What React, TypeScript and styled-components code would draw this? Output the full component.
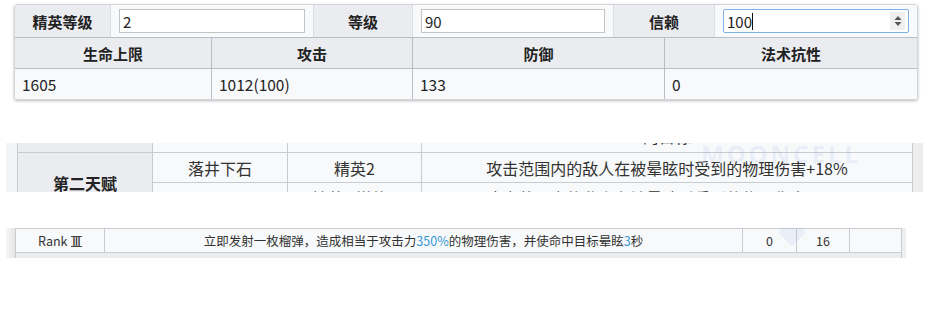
import styled, { createGlobalStyle } from "styled-components";

const GlobalStyle = createGlobalStyle`
  html, body { margin: 0; padding: 0; background: #fff; }
  body {
    font-family: "Noto Sans CJK SC", "Noto Sans", sans-serif;
    color: #222;
  }
  * { box-sizing: border-box; }
`;

const gridLine = "#c8ccd1";
const headBg = "#eaecf0";
const cellBg = "#f8f9fa";

export default function App() {
  return (
    <Page>
      <GlobalStyle />

      {/* 干员属性面板 */}
      <Panel>
        <LevelRow>
          <Label>精英等级</Label>
          <InputCell>
            <Field defaultValue="2" />
          </InputCell>
          <Label>等级</Label>
          <InputCell>
            <Field defaultValue="90" />
          </InputCell>
          <Label>信赖</Label>
          <InputCell $last>
            <FocusField>
              <span>100</span>
              <Caret />
              <Spinner>
                <svg width="8" height="12" viewBox="0 0 8 12">
                  <path d="M4 1 L7.5 5 H0.5 Z" fill="#555" />
                  <path d="M4 11 L7.5 7 H0.5 Z" fill="#555" />
                </svg>
              </Spinner>
            </FocusField>
          </InputCell>
        </LevelRow>

        <StatGrid>
          <Head>生命上限</Head>
          <Head>攻击</Head>
          <Head>防御</Head>
          <Head $last>法术抗性</Head>
          <Value>1605</Value>
          <Value>1012(100)</Value>
          <Value>133</Value>
          <Value $last>0</Value>
        </StatGrid>
      </Panel>

      {/* 天赋表 */}
      <TalentStrip>
        <EdgeLeft />
        <TalentClip>
          <TalentGrid>
            <TalentName />
            <TalentCell />
            <TalentCell />
            <TalentCell $bottom>的目标</TalentCell>

            <TalentName $span={2}>第二天赋</TalentName>
            <TalentCell>落井下石</TalentCell>
            <TalentCell>精英2</TalentCell>
            <TalentCell>攻击范围内的敌人在被晕眩时受到的物理伤害+18%</TalentCell>

            <TalentCell />
            <TalentCell>精英2 潜能5</TalentCell>
            <TalentCell>攻击范围内的敌人在被晕眩时受到的物理伤害+21%</TalentCell>
          </TalentGrid>
          <Watermark>MOONCELL</Watermark>
        </TalentClip>
        <EdgeRight />
      </TalentStrip>

      {/* 技能等级表 */}
      <SkillStrip>
        <SkillEdge />
        <SkillClip>
          <SkillGrid>
            <SkillCell>
              <span>
                Rank<Numeral>Ⅲ</Numeral>
              </span>
            </SkillCell>
            <SkillCell>
              <span>
                立即发射一枚榴弹，造成相当于攻击力<Hl>350%</Hl>的物理伤害，并使命中目标晕眩<Hl>3</Hl>秒
              </span>
            </SkillCell>
            <SkillCell>0</SkillCell>
            <SkillCell>16</SkillCell>
            <SkillCell />
          </SkillGrid>
          <NextRow />
          <Diamond />
        </SkillClip>
        <SkillEdgeRight />
      </SkillStrip>
    </Page>
  );
}

/* ===== layout ===== */

const Page = styled.div`
  width: 926px;
  height: 324px;
  overflow: hidden;
  display: flex;
  flex-direction: column;
  padding-top: 4px;
`;

/* ===== 属性面板 ===== */

const Panel = styled.section`
  width: 904px;
  margin-left: 14px;
  border: 1px solid #d3d6da;
  border-radius: 3px;
  box-shadow: 0 1px 3px rgba(0, 0, 0, 0.28);
  overflow: hidden;
`;

const LevelRow = styled.div`
  display: grid;
  grid-template-columns: 96px 203px 99px 201px 101px 202px;
  height: 33px;
  border-bottom: 1px solid #b9bec5;
`;

const Label = styled.div`
  display: flex;
  align-items: center;
  justify-content: center;
  background: ${headBg};
  border-right: 1px solid #dcdfe3;
  font-size: 15px;
  font-weight: 700;
`;

const InputCell = styled.div<{ $last?: boolean }>`
  display: flex;
  align-items: center;
  padding: 0 8px;
  background: ${cellBg};
  border-right: ${(p) => (p.$last ? "none" : "1px solid #dcdfe3")};
`;

const Field = styled.input`
  width: 100%;
  height: 24px;
  border: 1px solid #c4c4c4;
  padding: 0 3px;
  background: #fff;
  font-family: inherit;
  font-size: 15px;
  color: #222;
  outline: none;
`;

const FocusField = styled.div`
  width: 100%;
  height: 24px;
  display: flex;
  align-items: center;
  padding: 0 3px;
  background: #fff;
  border: 1px solid #7fb0e8;
  border-radius: 2px;
  font-size: 15px;
  color: #222;
`;

const Caret = styled.i`
  width: 1px;
  height: 17px;
  background: #111;
`;

const Spinner = styled.div`
  margin-left: auto;
  width: 15px;
  height: 18px;
  background: #f0f0f0;
  display: flex;
  align-items: center;
  justify-content: center;
`;

const StatGrid = styled.div`
  display: grid;
  grid-template-columns: 197px 201px 252px 252px;
  grid-template-rows: 31px 30px;
`;

const Head = styled.div<{ $last?: boolean }>`
  display: flex;
  align-items: center;
  justify-content: center;
  background: ${headBg};
  border-bottom: 1px solid #b9bec5;
  border-right: ${(p) => (p.$last ? "none" : "1px solid #b9bec5")};
  font-size: 15px;
  font-weight: 700;
`;

const Value = styled.div<{ $last?: boolean }>`
  display: flex;
  align-items: center;
  padding-left: 7px;
  background: ${cellBg};
  border-right: ${(p) => (p.$last ? "none" : "1px solid #b9bec5")};
  font-size: 15.5px;
  color: #222;
`;

/* ===== 天赋表 ===== */

const TalentStrip = styled.section`
  display: flex;
  height: 49px;
  margin: 43px 0 0 6px;
`;

const EdgeLeft = styled.div`
  width: 11px;
  background: #f2f3f4;
`;

const EdgeRight = styled.div`
  width: 10px;
  background: #ededed;
`;

const TalentClip = styled.div`
  position: relative;
  width: 896px;
  overflow: hidden;
`;

const TalentGrid = styled.div`
  display: grid;
  grid-template-columns: 134px 134px 133px 490px;
  grid-template-rows: 40px 29px 30px;
  gap: 1px;
  padding: 0 1px;
  margin-top: -31px;
  background: ${gridLine};
`;

const TalentName = styled.div<{ $span?: number }>`
  grid-row: span ${(p) => p.$span ?? 1};
  display: flex;
  align-items: center;
  justify-content: center;
  background: ${headBg};
  font-size: 16px;
  font-weight: 700;
`;

const TalentCell = styled.div<{ $bottom?: boolean }>`
  display: flex;
  align-items: ${(p) => (p.$bottom ? "flex-end" : "center")};
  justify-content: center;
  padding-bottom: ${(p) => (p.$bottom ? "5px" : "0")};
  background: ${cellBg};
  font-size: 16px;
  line-height: 22px;
  color: #333;
  white-space: nowrap;
`;

const Watermark = styled.div`
  position: absolute;
  left: 684px;
  top: -6px;
  font-family: "Noto Sans", sans-serif;
  font-size: 24px;
  font-weight: 700;
  letter-spacing: 3px;
  color: rgba(120, 160, 230, 0.13);
  pointer-events: none;
`;

/* ===== 技能表 ===== */

const SkillStrip = styled.section`
  display: flex;
  height: 30px;
  margin: 36px 0 0 6px;
`;

const SkillEdge = styled.div`
  width: 9px;
  background: linear-gradient(to right, #f6f6f6, #e6e6e6);
`;

const SkillEdgeRight = styled.div`
  width: 4px;
  background: #eeeeee;
`;

const SkillClip = styled.div`
  position: relative;
  width: 887px;
  overflow: hidden;
`;

const SkillGrid = styled.div`
  display: grid;
  grid-template-columns: 88px 637px 53px 52px 51px;
  grid-template-rows: 23px;
  gap: 1px;
  padding: 1px;
  background: ${gridLine};
`;

const SkillCell = styled.div`
  display: flex;
  align-items: center;
  justify-content: center;
  background: ${cellBg};
  font-size: 12.5px;
  color: #333;
  white-space: nowrap;
`;

/* 罗马数字上下带横线 */
const Numeral = styled.span`
  display: inline-block;
  margin-left: 4px;
  font-family: "Liberation Serif", serif;
  font-size: 13px;
  line-height: 9px;
  padding: 0 1px;
  border-top: 1px solid #444;
  border-bottom: 1px solid #444;
  letter-spacing: -0.5px;
`;

const Hl = styled.span`
  color: #3a9ad9;
`;

const NextRow = styled.div`
  height: 5px;
  background: ${headBg};
  border-left: 1px solid ${gridLine};
  border-right: 1px solid ${gridLine};
`;

const Diamond = styled.div`
  position: absolute;
  left: 767px;
  top: -6px;
  width: 20px;
  height: 20px;
  transform: rotate(45deg);
  background: rgba(120, 160, 230, 0.1);
  pointer-events: none;
`;
